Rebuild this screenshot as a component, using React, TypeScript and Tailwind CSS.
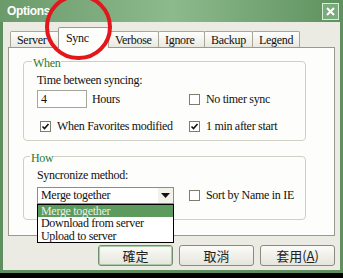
import React from "react";

const tabs = [
  { label: "Server", w: "w-[49px]" },
  { label: "Sync", w: "w-[51px]", active: true },
  { label: "Verbose", w: "w-[51px]" },
  { label: "Ignore", w: "w-[47px]" },
  { label: "Backup", w: "w-[49px]" },
  { label: "Legend", w: "w-[48px]" },
];

const Check = ({ checked }: { checked?: boolean }) => (
  <span className="w-[11px] h-[11px] border border-[#7d7d70] bg-white flex items-center justify-center shrink-0">
    {checked && (
      <svg width="9" height="9" viewBox="0 0 9 9">
        <path d="M1.5 4.5 L3.5 6.5 L7.5 2" stroke="#111" strokeWidth="1.6" fill="none" />
      </svg>
    )}
  </span>
);

const Btn = ({ children, primary }: { children: React.ReactNode; primary?: boolean }) => (
  <div
    className={`w-[75px] h-[21px] rounded-[3px] border flex items-center justify-center text-[13px] text-[#222] tracking-normal bg-gradient-to-b from-[#fbfbf8] to-[#e6e5dc] font-['Noto_Sans_CJK_TC',sans-serif] ${
      primary ? "border-[#6f8f6f] shadow-[inset_0_0_0_1px_#a9cba9]" : "border-[#8a8a7e]"
    }`}
  >
    {children}
  </div>
);

export default function App() {
  return (
    <div className="w-[343px] h-[278px] bg-black relative overflow-hidden font-['Liberation_Serif',serif] text-[12px] tracking-[-0.3px] text-[#111]">
      <div className="h-[273px] flex flex-col bg-[#5f8f5f] px-[3px] pb-[3px]">
        {/* title bar */}
        <div className="h-[22px] shrink-0 flex items-center justify-between -mx-[3px] pl-[7px] pr-[4px] bg-gradient-to-r from-[#6b9a6b] via-[#8dba8d] to-[#5e915e]">
          <span className="text-white font-bold text-[12px] font-['Liberation_Sans',sans-serif]">Options</span>
          <div className="w-[17px] h-[17px] border border-[#d9ecd9] bg-[#7aab7a] flex items-center justify-center">
            <svg width="11" height="11" viewBox="0 0 11 11">
              <path d="M2 2 L9 9 M9 2 L2 9" stroke="#fff" strokeWidth="2" />
            </svg>
          </div>
        </div>

        {/* body */}
        <div className="flex-1 bg-[#ecebe3] flex flex-col pl-[5px] pr-[3px] pt-[5px]">
          {/* tabs */}
          <div className="flex items-end pl-[2px] h-[20px] relative z-10">
            {tabs.map((t) =>
              t.active ? (
                <div
                  key={t.label}
                  className={`${t.w} h-[21px] -mb-px -ml-px bg-[#fdfdfb] border border-b-0 border-[#9a9a8c] rounded-t-[2px] flex items-center pl-[7px]`}
                >
                  {t.label}
                </div>
              ) : (
                <div
                  key={t.label}
                  className={`${t.w} h-[16px] bg-gradient-to-b from-[#fefefd] to-[#e9e8e0] border border-b-0 border-[#a7a79a] rounded-t-[2px] flex items-center pl-[6px] -ml-px first:ml-0`}
                >
                  {t.label}
                </div>
              )
            )}
          </div>

          {/* panel */}
          <div className="h-[189px] bg-[#fdfdfb] border border-[#9a9a8c] mr-[2px] flex flex-col pl-[14px] pt-[13px]">
            {/* When group */}
            <div className="w-[283px] h-[80px] border border-[#d0d0c2] rounded-[4px] relative pl-[13px] pt-[11px]">
              <span className="absolute -top-[8px] left-[8px] px-[1px] bg-[#fdfdfb] text-[#2d7a2d]">When</span>
              <div className="leading-[14px]">Time between syncing:</div>
              <div className="flex items-center mt-[3px]">
                <div className="w-[152px] flex items-center">
                  <div className="w-[50px] h-[18px] border border-[#a5a59a] bg-white pl-[3px] flex items-center">4</div>
                  <span className="ml-[5px]">Hours</span>
                </div>
                <div className="flex items-center gap-[6px]">
                  <Check />
                  <span>No timer sync</span>
                </div>
              </div>
              <div className="flex items-center mt-[9px]">
                <div className="w-[152px] flex items-center gap-[6px] pl-[3px]">
                  <Check checked />
                  <span>When Favorites modified</span>
                </div>
                <div className="flex items-center gap-[6px]">
                  <Check checked />
                  <span>1 min after start</span>
                </div>
              </div>
            </div>

            {/* How group */}
            <div className="w-[283px] h-[64px] mt-[15px] border border-[#d0d0c2] rounded-[4px] relative pl-[13px] pt-[11px]">
              <span className="absolute -top-[8px] left-[6px] px-[1px] bg-[#fdfdfb] text-[#2d7a2d]">How</span>
              <div className="leading-[14px]">Syncronize method:</div>
              <div className="flex items-center mt-[4px]">
                <div className="w-[152px] relative">
                  <div className="w-[137px] h-[17px] border border-[#8d8d80] bg-white flex items-center">
                    <span className="flex-1 pl-[3px]">Merge together</span>
                    <div className="w-[15px] h-full bg-[#f2f1ea] flex items-center justify-center">
                      <svg width="9" height="5" viewBox="0 0 9 5">
                        <path d="M0 0 H9 L4.5 5 Z" fill="#111" />
                      </svg>
                    </div>
                  </div>
                  {/* open list */}
                  <div className="absolute left-0 top-[17px] w-[137px] border border-black bg-white z-20 leading-[12.6px]">
                    <div className="bg-[#5d9a5d] text-[#e6f1e6] pl-[3px]">Merge together</div>
                    <div className="pl-[3px]">Download from server</div>
                    <div className="pl-[3px]">Upload to server</div>
                  </div>
                </div>
                <div className="flex items-center gap-[6px]">
                  <Check />
                  <span>Sort by Name in IE</span>
                </div>
              </div>
            </div>
          </div>

          {/* buttons */}
          <div className="flex justify-end gap-[6px] mt-[9px] pr-[2px]">
            <Btn primary>確定</Btn>
            <Btn>取消</Btn>
            <Btn>
              套用(<span className="underline">A</span>)
            </Btn>
          </div>
        </div>
      </div>

      {/* highlight circle */}
      <div className="absolute left-[45px] -top-[6px] w-[67px] h-[66px] rounded-full border-[4px] border-[#e2171c] pointer-events-none z-30" />
    </div>
  );
}
